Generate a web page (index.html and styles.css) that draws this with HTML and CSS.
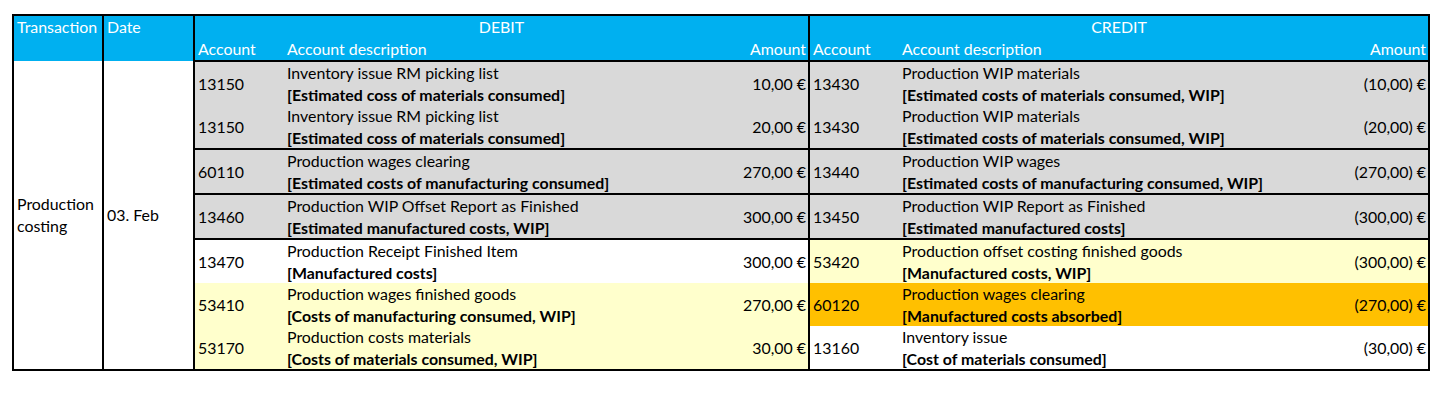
FILE: index.html
```html
<!DOCTYPE html>
<html lang="en">
<head>
  <meta charset="UTF-8">
  <title>Production costing - posting</title>
  <link rel="stylesheet" href="styles.css">
</head>
<body>
  <div class="sheet">
    <table class="ledger">
      <colgroup>
        <col class="col-trans">
        <col class="col-date">
        <col class="col-acct">
        <col class="col-desc">
        <col class="col-amt">
        <col class="col-acct">
        <col class="col-desc">
        <col class="col-amt-cr">
      </colgroup>
      <thead>
        <tr>
          <th rowspan="2" class="sep">Transaction</th>
          <th rowspan="2" class="sep">Date</th>
          <th colspan="3" class="side sep">DEBIT</th>
          <th colspan="3" class="side">CREDIT</th>
        </tr>
        <tr>
          <th>Account</th>
          <th>Account description</th>
          <th class="num sep">Amount</th>
          <th>Account</th>
          <th>Account description</th>
          <th class="num">Amount</th>
        </tr>
      </thead>
      <tbody>
        <tr>
          <td rowspan="7" class="sep wrap">Production costing</td>
          <td rowspan="7" class="sep">03. Feb</td>
          <td class="gray">13150</td>
          <td class="gray"><div>Inventory issue RM picking list</div><div class="tag">[Estimated coss of materials consumed]</div></td>
          <td class="gray num sep">10,00 €</td>
          <td class="gray">13430</td>
          <td class="gray"><div>Production WIP materials</div><div class="tag">[Estimated costs of materials consumed, WIP]</div></td>
          <td class="gray num">(10,00) €</td>
        </tr>
        <tr class="group-end">
          <td class="gray">13150</td>
          <td class="gray"><div>Inventory issue RM picking list</div><div class="tag">[Estimated coss of materials consumed]</div></td>
          <td class="gray num sep">20,00 €</td>
          <td class="gray">13430</td>
          <td class="gray"><div>Production WIP materials</div><div class="tag">[Estimated costs of materials consumed, WIP]</div></td>
          <td class="gray num">(20,00) €</td>
        </tr>
        <tr class="group-end">
          <td class="gray">60110</td>
          <td class="gray"><div>Production wages clearing</div><div class="tag">[Estimated costs of manufacturing consumed]</div></td>
          <td class="gray num sep">270,00 €</td>
          <td class="gray">13440</td>
          <td class="gray"><div>Production WIP wages</div><div class="tag">[Estimated costs of manufacturing consumed, WIP]</div></td>
          <td class="gray num">(270,00) €</td>
        </tr>
        <tr class="group-end">
          <td class="gray">13460</td>
          <td class="gray"><div>Production WIP Offset Report as Finished</div><div class="tag">[Estimated manufactured costs, WIP]</div></td>
          <td class="gray num sep">300,00 €</td>
          <td class="gray">13450</td>
          <td class="gray"><div>Production WIP Report as Finished</div><div class="tag">[Estimated manufactured costs]</div></td>
          <td class="gray num">(300,00) €</td>
        </tr>
        <tr>
          <td>13470</td>
          <td><div>Production Receipt Finished Item</div><div class="tag">[Manufactured costs]</div></td>
          <td class="num sep">300,00 €</td>
          <td class="cream">53420</td>
          <td class="cream"><div>Production offset costing finished goods</div><div class="tag">[Manufactured costs, WIP]</div></td>
          <td class="cream num">(300,00) €</td>
        </tr>
        <tr>
          <td class="cream">53410</td>
          <td class="cream"><div>Production wages finished goods</div><div class="tag">[Costs of manufacturing consumed, WIP]</div></td>
          <td class="cream num sep">270,00 €</td>
          <td class="amber">60120</td>
          <td class="amber"><div>Production wages clearing</div><div class="tag">[Manufactured costs absorbed]</div></td>
          <td class="amber num">(270,00) €</td>
        </tr>
        <tr>
          <td class="cream">53170</td>
          <td class="cream"><div>Production costs materials</div><div class="tag">[Costs of materials consumed, WIP]</div></td>
          <td class="cream num sep">30,00 €</td>
          <td>13160</td>
          <td><div>Inventory issue</div><div class="tag">[Cost of materials consumed]</div></td>
          <td class="num">(30,00) €</td>
        </tr>
      </tbody>
    </table>
  </div>
</body>
</html>
```

FILE: styles.css
```css
:root {
  --sheet-blue: #00b0f0;
  --sheet-gray: #d9d9d9;
  --sheet-cream: #ffffcc;
  --sheet-amber: #ffc000;
  --sheet-line: #000000;
}

body {
  margin: 0;
  font-family: Lato, "Open Sans", sans-serif;
  font-size: 15.9px;
  color: #000;
  background: #fff;
}

.sheet {
  padding: 14px 0 0 12px;
}

.ledger {
  border-collapse: collapse;
  table-layout: fixed;
  width: 1416px;
  border: 2px solid var(--sheet-line);
}

.col-trans { width: 90px; }
.col-date { width: 91px; }
.col-acct { width: 90px; }
.col-desc { width: 440px; }
.col-amt { width: 85px; }
.col-amt-cr { width: 90px; }

.ledger th,
.ledger td {
  padding: 0 3px;
  text-align: left;
  font-weight: normal;
  white-space: nowrap;
  overflow: hidden;
}

.ledger th {
  background: var(--sheet-blue);
  color: #fff;
  height: 22px;
  line-height: 22px;
  vertical-align: top;
}

.ledger th.side {
  text-align: center;
}

.ledger thead tr:last-child th {
  border-bottom: 2px solid var(--sheet-line);
}

.ledger td {
  height: 43px;
  line-height: 21.5px;
  vertical-align: middle;
}

.ledger td.wrap {
  white-space: normal;
  line-height: 22px;
}

.ledger .num {
  text-align: right;
  padding-right: 2px;
}

.ledger .sep {
  border-right: 2px solid var(--sheet-line);
}

.ledger .group-end td {
  border-bottom: 2px solid var(--sheet-line);
}

.tag {
  font-weight: 700;
}

.gray { background: var(--sheet-gray); }
.cream { background: var(--sheet-cream); }
.amber { background: var(--sheet-amber); }
```
